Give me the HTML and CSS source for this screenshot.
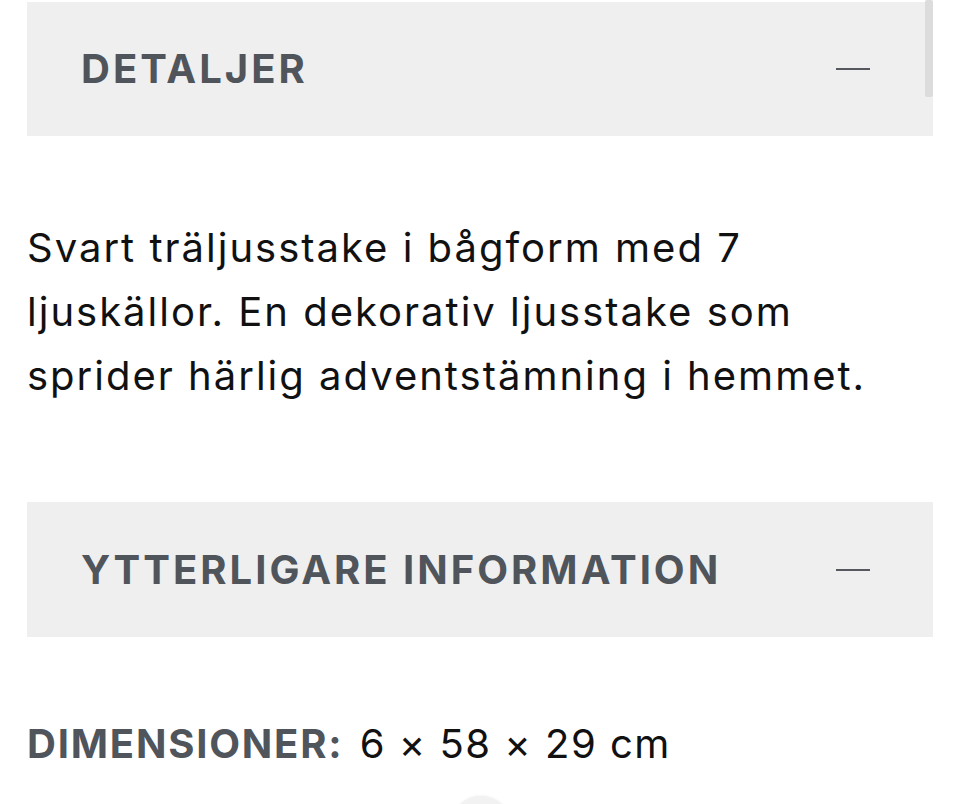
FILE: index.html
```html
<!DOCTYPE html>
<html lang="sv">
<head>
<meta charset="utf-8">
<title>Detaljer</title>
<link rel="stylesheet" href="styles.css">
</head>
<body>
<main class="page">
  <section class="accordion">
    <div class="acc-head">
      <h2 class="acc-title">DETALJER</h2>
      <span class="acc-minus"></span>
    </div>
    <div class="acc-body desc">
      <p>Svart träljusstake i bågform med 7 ljuskällor. En dekorativ ljusstake som sprider härlig adventstämning i hemmet.</p>
    </div>
  </section>
  <section class="accordion second">
    <div class="acc-head">
      <h2 class="acc-title">YTTERLIGARE INFORMATION</h2>
      <span class="acc-minus"></span>
    </div>
    <div class="acc-body info">
      <p><span class="label">DIMENSIONER:</span> <span class="value">6 × 58 × 29 cm</span></p>
    </div>
  </section>
</main>
<div class="scroll-thumb"></div>
<div class="float-btn"></div>
</body>
</html>
```
FILE: styles.css
```css
html, body {
  margin: 0;
  padding: 0;
  background: #ffffff;
  overflow: hidden;
}
body {
  font-family: Inter, "Noto Sans", sans-serif;
  color: #111111;
  height: 804px;
  position: relative;
}
.page {
  padding: 2px 27px 0 27px;
}
.acc-head {
  background: #efefef;
  height: 134px;
  display: flex;
  align-items: center;
  justify-content: space-between;
  padding: 0 63px 0 54px;
}
.second .acc-head {
  height: 135px;
}
.acc-title {
  margin: 0;
  font-size: 40px;
  font-weight: 700;
  letter-spacing: 3px;
  color: #50545b;
  line-height: 1;
}
.acc-minus {
  width: 34px;
  height: 2px;
  background: #55595f;
  display: block;
}
.acc-body p {
  margin: 0;
  font-size: 40px;
  line-height: 64px;
  letter-spacing: 2px;
  color: #111111;
}
.desc {
  padding: 80px 0 94px 0;
}
.info {
  padding: 75px 0 0 0;
}
.label {
  font-weight: 700;
  color: #50545b;
  letter-spacing: 1.8px;
  margin-right: 3px;
}
.value {
  letter-spacing: 1.5px;
}
.scroll-thumb {
  position: absolute;
  left: 925px;
  top: 0;
  width: 8px;
  height: 97px;
  background: #dcdcdc;
  border-radius: 2px;
}
.float-btn {
  position: absolute;
  left: 451px;
  top: 796px;
  width: 60px;
  height: 60px;
  border-radius: 50%;
  background: #f2f2f2;
  box-shadow: 0 0 3px rgba(0,0,0,0.08);
}
```
